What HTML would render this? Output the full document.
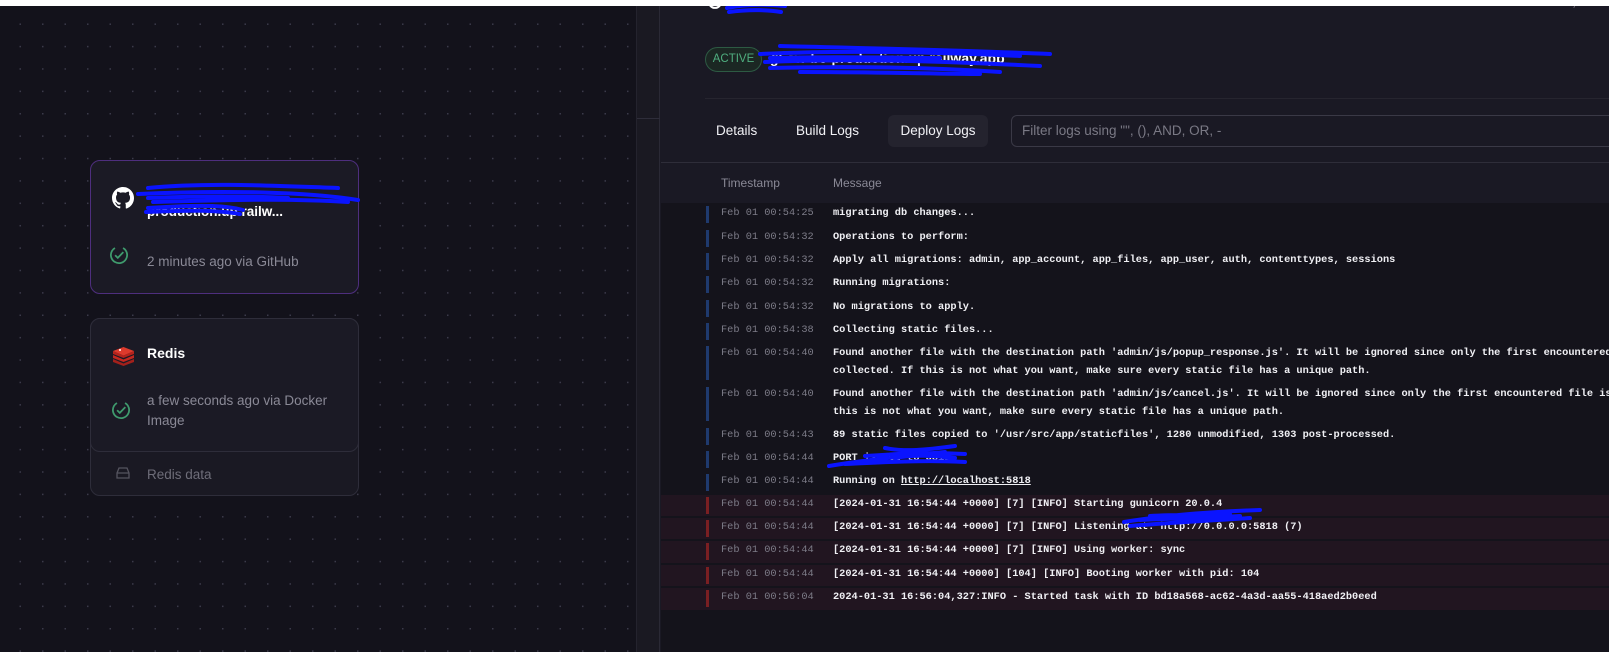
<!DOCTYPE html>
<html><head><meta charset="utf-8"><style>
*{margin:0;padding:0;box-sizing:border-box}
body{width:1609px;height:652px;overflow:hidden;background:#13121b;font-family:"Liberation Sans",sans-serif;position:relative}
.abs{position:absolute}
.canvas{left:0;top:0;width:636px;height:652px;background-color:#13121b;background-image:radial-gradient(circle,#3b3a4a 0.8px,transparent 1px);background-size:22.5px 22.4px;background-position:9px 13px}
.strip{left:636px;top:0;width:24px;height:652px;background:#1a1922;border-left:1px solid #24232e;border-right:1px solid #2a2935}
.panel{left:660px;top:0;width:949px;height:652px;background:#1a1924}
.logs{left:661px;top:203px;width:948px;height:449px;background:#14131b}
.card{background:#1b1a25;border:1px solid #2e2d3a;border-radius:10px}
.t{color:#8a8996;font-size:13.5px}
.row{position:absolute;left:661px;width:948px;font-family:"Liberation Mono",monospace;font-size:10.3px;line-height:18px}
.row .bar{position:absolute;left:45px;top:2px;width:3px;background:#1f3a6e}
.row .ts{position:absolute;left:60px;color:#7d7c88}
.row .m{position:absolute;left:172px;color:#f0f0f4;font-weight:bold;white-space:pre}
.red{background:#211520}
.red .bar{background:#7a1f22}
.tab{position:absolute;top:115px;height:32px;line-height:32px;color:#f1f1f5;font-size:13.5px}
svg.s path{stroke:#0a14ff;stroke-width:4;fill:none;stroke-linecap:round}
</style></head><body>
<div class="abs canvas"></div>
<div class="abs strip"><div class="abs" style="left:0;top:118px;width:24px;height:1px;background:#2e2d3a"></div></div>
<div class="abs panel"></div>
<div class="abs logs"></div>

<!-- card 1 -->
<div class="abs card" style="left:90px;top:160px;width:269px;height:134px;border-color:#4e2e7e"></div>
<svg class="abs" style="left:112px;top:187px" width="22" height="22" viewBox="0 0 16 16"><path fill="#fff" d="M8 0C3.58 0 0 3.58 0 8c0 3.54 2.29 6.530 5.47 7.59.4.07.55-.17.55-.38v-1.33c-2.23.48-2.7-1.07-2.7-1.07-.36-.93-.89-1.17-.89-1.17-.73-.5.06-.49.06-.49.8.06 1.23.83 1.23.83.71 1.23 1.87.87 2.33.66.07-.52.28-.87.51-1.07-1.78-.2-3.64-.89-3.64-3.95 0-.87.31-1.59.82-2.15-.08-.2-.36-1.02.08-2.12 0 0 .67-.21 2.2.82a7.6 7.6 0 014 0c1.53-1.04 2.2-.82 2.2-.82.44 1.1.16 1.920.08 2.12.51.56.82 1.27.82 2.15 0 3.07-1.870 3.75-3.65 3.95.29.25.54.73.54 1.48v2.2c0 .21.15.46.55.38A8.01 8.01 0 0016 8c0-4.42-3.58-8-8-8z"/></svg>
<div class="abs" style="left:147px;top:204px;color:#fff;font-size:13.5px;font-weight:bold">production.up.railw...</div>
<svg class="abs s" style="left:108px;top:180px" width="260" height="40"><path d="M40 8 C100 2 170 6 230 8 M30 14 C120 10 200 12 250 20 M45 22 C120 20 180 18 240 22 M40 28 C100 24 120 26 135 30 M38 32 C80 30 110 30 132 34 M40 18 C90 16 140 16 180 18"/></svg>
<svg class="abs" style="left:109px;top:245px" width="20" height="20" viewBox="0 0 18 18"><circle cx="9" cy="9" r="7.3" fill="none" stroke="#3f9a6d" stroke-width="1.6" stroke-dasharray="38 8" transform="rotate(-60 9 9)"/><path d="M5.5 9.2l2.4 2.4 5-5.2" fill="none" stroke="#3f9a6d" stroke-width="1.6"/></svg>
<div class="abs t" style="left:147px;top:254px">2 minutes ago via GitHub</div>

<!-- card 2 -->
<div class="abs card" style="left:90px;top:318px;width:269px;height:178px;background:#1a1923"></div>
<div class="abs card" style="left:90px;top:318px;width:269px;height:134px"></div>
<svg class="abs" style="left:112px;top:346px" width="23" height="20" viewBox="0 0 23 20"><path d="M1 13l10.5 4.5L22 13v3l-10.5 4L1 16z" fill="#a3201b"/><path d="M1 9l10.5 4.5L22 9v3l-10.5 4L1 12z" fill="#c4271f"/><path d="M1 5l10.5 4.5L22 5v3l-10.5 4L1 8z" fill="#b5231c"/><path d="M1 5l10.5-4L22 5l-10.5 4.5z" fill="#dd3a2c"/><circle cx="8" cy="4" r="1" fill="#fff"/></svg>
<div class="abs" style="left:147px;top:345px;color:#fff;font-size:14px;font-weight:bold">Redis</div>
<svg class="abs" style="left:111px;top:400px" width="20" height="20" viewBox="0 0 18 18"><circle cx="9" cy="9" r="7.3" fill="none" stroke="#3f9a6d" stroke-width="1.6" stroke-dasharray="38 8" transform="rotate(-60 9 9)"/><path d="M5.5 9.2l2.4 2.4 5-5.2" fill="none" stroke="#3f9a6d" stroke-width="1.6"/></svg>
<div class="abs t" style="left:147px;top:391px;line-height:20px">a few seconds ago via Docker<br>Image</div>
<svg class="abs" style="left:116px;top:467px" width="14" height="12" viewBox="0 0 14 12"><path d="M1 6L3 1h8l2 5v5H1z M1 6h12" fill="none" stroke="#55545f" stroke-width="1.3"/></svg>
<div class="abs t" style="left:147px;top:467px;color:#6e6d79">Redis data</div>

<!-- header -->
<svg class="abs" style="left:704px;top:0" width="22" height="14" viewBox="0 0 16 16"><circle cx="8" cy="2" r="7" fill="none" stroke="#fff" stroke-width="2.4"/></svg>
<svg class="abs s" style="left:725px;top:0" width="70" height="16"><path d="M2 8C20 4 40 4 60 6M4 12C25 9 45 10 56 12M8 4C30 2 50 2 62 4"/></svg>
<div class="abs" style="left:813px;top:-6px;color:#8a8996;font-size:13px">503cb71</div>
<div class="abs" style="left:1539px;top:-6px;color:#8a8996;font-size:13px">Feb 1, 2024</div>
<div class="abs" style="left:705px;top:47px;width:57px;height:25px;border:1px solid #2d5a43;border-radius:13px;background:#1b2723;color:#4fae7f;font-size:11.5px;line-height:23px;text-align:center">ACTIVE</div>
<div class="abs" style="left:770px;top:50px;color:#fff;font-size:14px;font-weight:bold">gl-sw-be-production.up.railway.app</div>
<svg class="abs s" style="left:740px;top:42px" width="320" height="36"><path d="M40 4C120 6 220 8 310 12M20 12C100 8 200 10 280 14M25 20C120 16 220 20 300 24M30 26C120 24 200 26 260 30M60 30C140 30 200 32 240 32M30 16C100 14 160 16 200 16"/></svg>
<div class="abs" style="left:705px;top:98px;width:904px;height:1px;background:#26252f"></div>
<div class="tab" style="left:716px">Details</div>
<div class="tab" style="left:796px">Build Logs</div>
<div class="tab" style="left:888px;width:100px;background:#24232e;border-radius:6px;text-align:center">Deploy Logs</div>
<div class="abs" style="left:1011px;top:115px;width:620px;height:32px;border:1px solid #3a3946;border-radius:6px;color:#7a7985;font-size:13.5px;line-height:30px;padding-left:10px">Filter logs using "", (), AND, OR, -</div>
<div class="abs" style="left:661px;top:162px;width:948px;height:1px;background:#2e2d39"></div>
<div class="abs" style="left:721px;top:176px;color:#8a8996;font-size:12px">Timestamp</div>
<div class="abs" style="left:833px;top:176px;color:#8a8996;font-size:12px">Message</div>

<!-- rows -->
<div class="row" style="top:204px;height:21px"><div class="bar" style="height:17px"></div><span class="ts">Feb 01 00:54:25</span><span class="m">migrating db changes...</span></div>
<div class="row" style="top:228px;height:21px"><div class="bar" style="height:17px"></div><span class="ts">Feb 01 00:54:32</span><span class="m">Operations to perform:</span></div>
<div class="row" style="top:251px;height:21px"><div class="bar" style="height:17px"></div><span class="ts">Feb 01 00:54:32</span><span class="m">Apply all migrations: admin, app_account, app_files, app_user, auth, contenttypes, sessions</span></div>
<div class="row" style="top:274px;height:21px"><div class="bar" style="height:17px"></div><span class="ts">Feb 01 00:54:32</span><span class="m">Running migrations:</span></div>
<div class="row" style="top:298px;height:21px"><div class="bar" style="height:17px"></div><span class="ts">Feb 01 00:54:32</span><span class="m">No migrations to apply.</span></div>
<div class="row" style="top:321px;height:21px"><div class="bar" style="height:17px"></div><span class="ts">Feb 01 00:54:38</span><span class="m">Collecting static files...</span></div>
<div class="row" style="top:344px;height:38px"><div class="bar" style="height:34px"></div><span class="ts">Feb 01 00:54:40</span><span class="m">Found another file with the destination path 'admin/js/popup_response.js'. It will be ignored since only the first encountered file is
collected. If this is not what you want, make sure every static file has a unique path.</span></div>
<div class="row" style="top:385px;height:38px"><div class="bar" style="height:34px"></div><span class="ts">Feb 01 00:54:40</span><span class="m">Found another file with the destination path 'admin/js/cancel.js'. It will be ignored since only the first encountered file is
this is not what you want, make sure every static file has a unique path.</span></div>
<div class="row" style="top:426px;height:21px"><div class="bar" style="height:17px"></div><span class="ts">Feb 01 00:54:43</span><span class="m">89 static files copied to '/usr/src/app/staticfiles', 1280 unmodified, 1303 post-processed.</span></div>
<div class="row" style="top:449px;height:21px"><div class="bar" style="height:17px"></div><span class="ts">Feb 01 00:54:44</span><span class="m">PORT is set to 5818</span></div>
<svg class="abs s" style="left:825px;top:442px" width="160" height="32"><path d="M4 24C40 18 80 14 120 10M20 22C60 20 100 18 140 20M60 6C80 10 100 8 130 4M70 16C90 12 110 14 130 16M40 14C70 12 100 10 140 12"/></svg>
<div class="row" style="top:472px;height:21px"><div class="bar" style="height:17px"></div><span class="ts">Feb 01 00:54:44</span><span class="m">Running on <u>http://localhost:5818</u></span></div>
<div class="row red" style="top:495px;height:21px"><div class="bar" style="height:17px"></div><span class="ts">Feb 01 00:54:44</span><span class="m">[2024-01-31 16:54:44 +0000] [7] [INFO] Starting gunicorn 20.0.4</span></div>
<div class="row red" style="top:518px;height:21px"><div class="bar" style="height:17px"></div><span class="ts">Feb 01 00:54:44</span><span class="m">[2024-01-31 16:54:44 +0000] [7] [INFO] Listening at: http://0.0.0.0:5818 (7)</span></div>
<svg class="abs s" style="left:1120px;top:506px" width="150" height="26"><path d="M4 16C40 10 80 6 140 4M10 20C60 16 100 14 130 12M30 10C60 8 90 10 110 8M20 14C60 12 90 12 120 10"/></svg>
<div class="row red" style="top:541px;height:22px"><div class="bar" style="height:17px"></div><span class="ts">Feb 01 00:54:44</span><span class="m">[2024-01-31 16:54:44 +0000] [7] [INFO] Using worker: sync</span></div>
<div class="row red" style="top:565px;height:21px"><div class="bar" style="height:17px"></div><span class="ts">Feb 01 00:54:44</span><span class="m">[2024-01-31 16:54:44 +0000] [104] [INFO] Booting worker with pid: 104</span></div>
<div class="row red" style="top:588px;height:22px"><div class="bar" style="height:17px"></div><span class="ts">Feb 01 00:56:04</span><span class="m">2024-01-31 16:56:04,327:INFO - Started task with ID bd18a568-ac62-4a3d-aa55-418aed2b0eed</span></div>

<div class="abs" style="left:0;top:0;width:1609px;height:6px;background:#fff"></div>
</body></html>
